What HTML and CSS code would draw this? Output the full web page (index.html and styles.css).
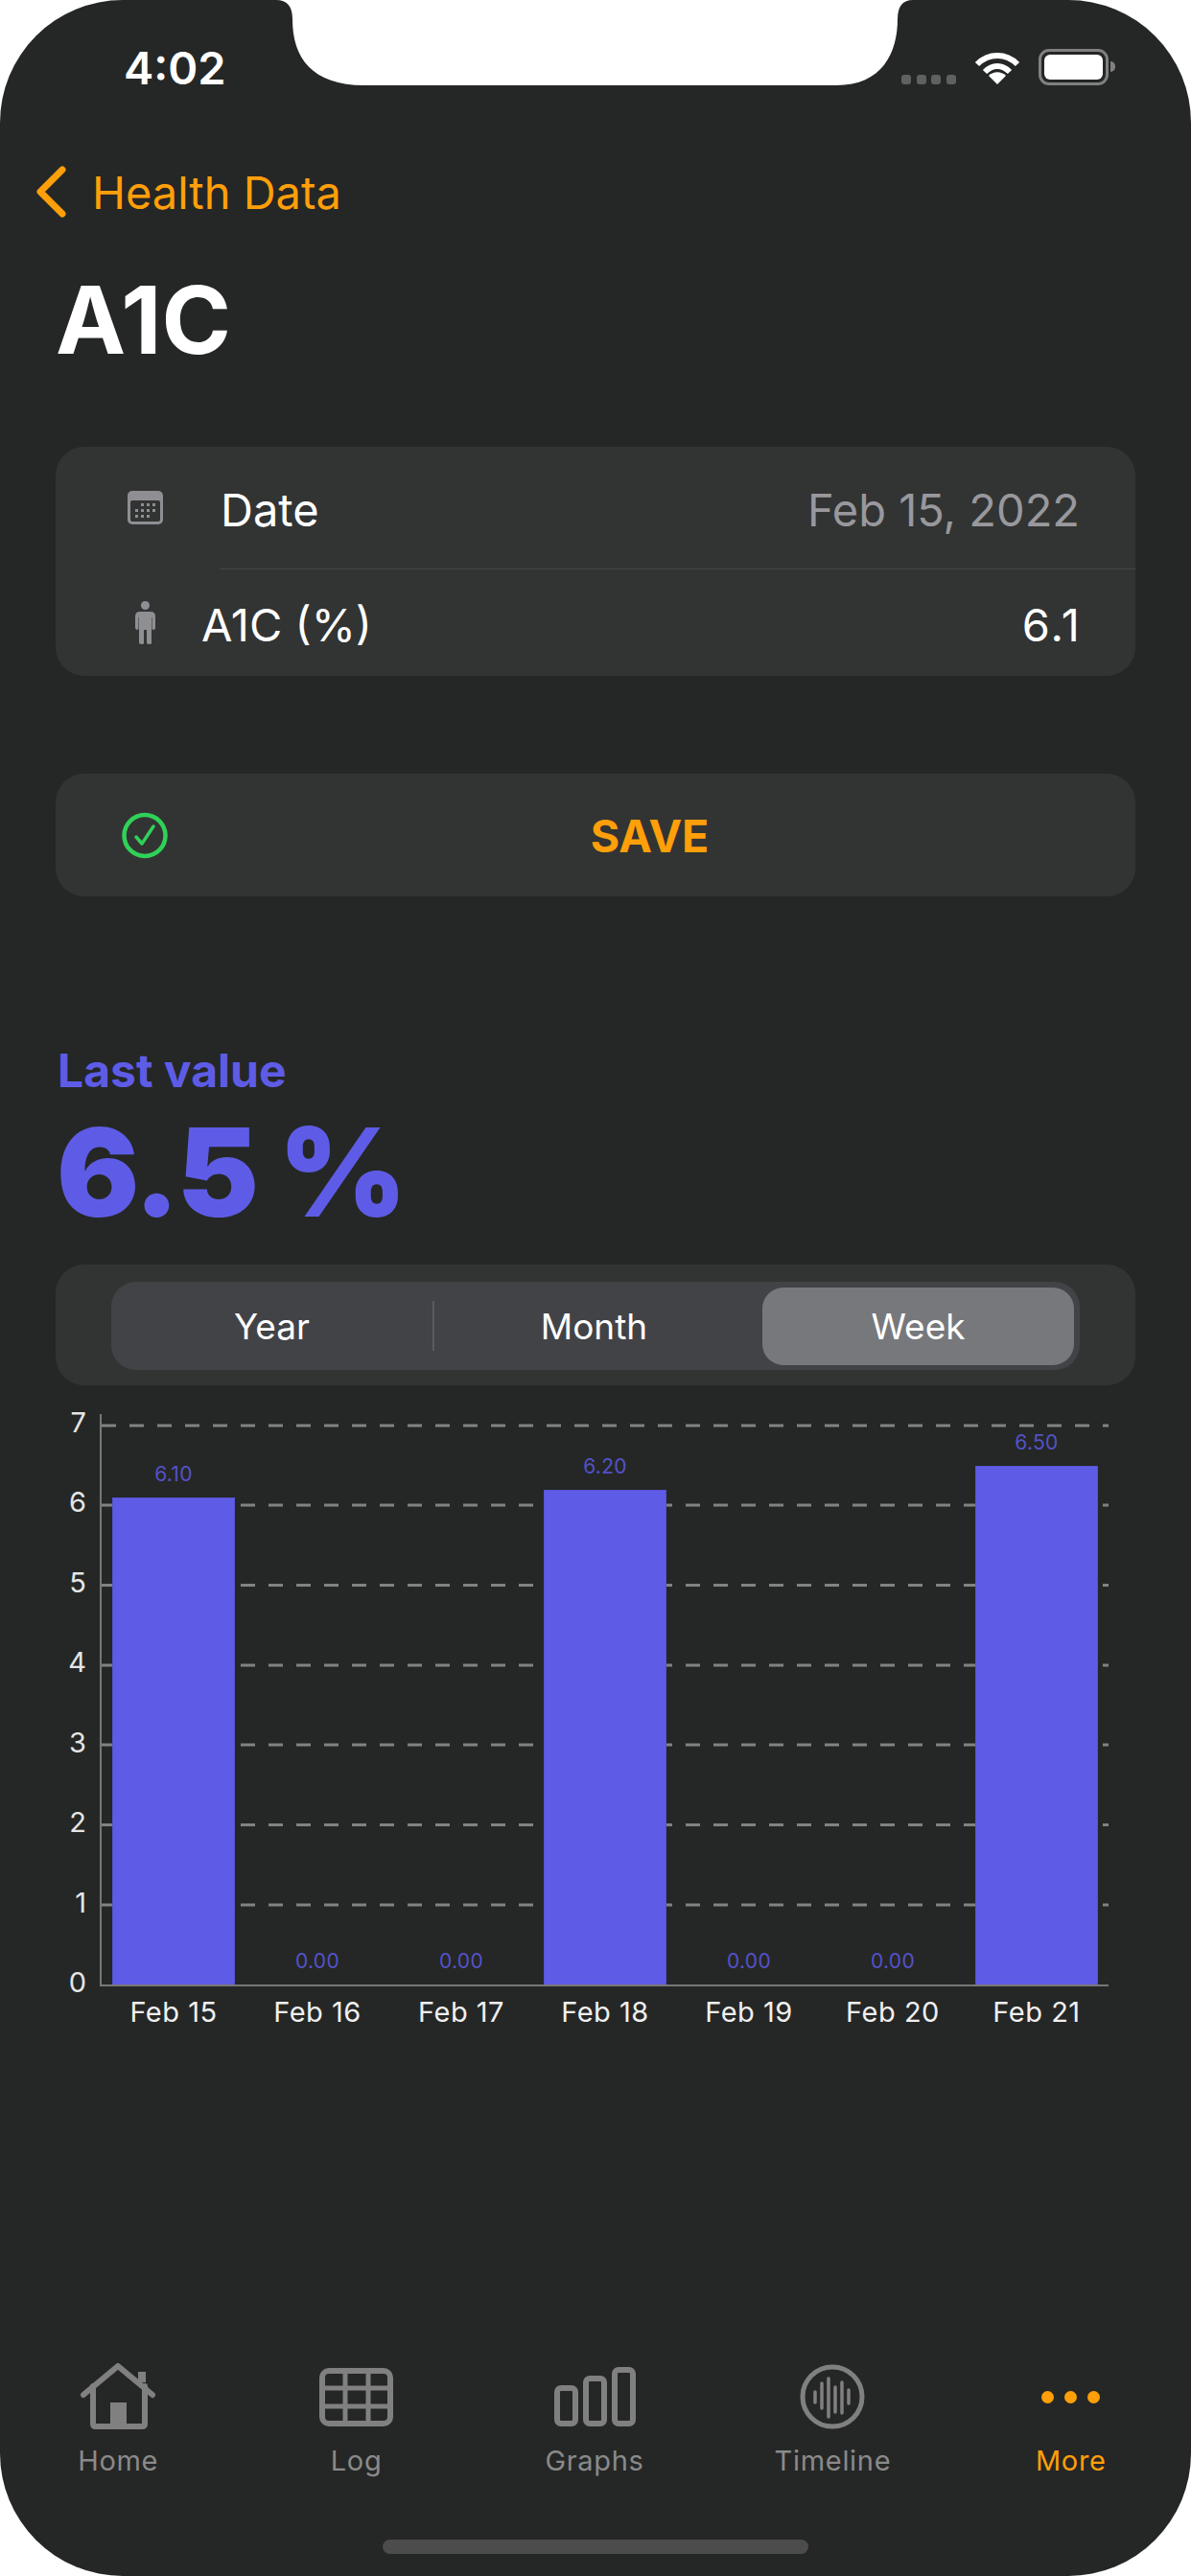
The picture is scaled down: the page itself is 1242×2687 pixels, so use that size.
FILE: index.html
```html
<!DOCTYPE html>
<html lang="en">
<head>
    <meta charset="UTF-8">
    <meta name="viewport" content="width=device-width, initial-scale=1.0">
    <title>A1C</title>
    <link rel="stylesheet" href="styles.css">
</head>
<body>
    <div class="screen">
        <svg class="notch" width="680" height="89" viewBox="0 0 680 89">
            <path d="M8 0Q25 0 25 20C25 60 45 89 100 89L592 89C640 89 656 55 656 20Q656 0 672 0Z" fill="#fff"/>
        </svg>

        <div class="status-bar">
            <span class="time">4:02</span>
            <div class="status-icons">
                <div class="signal"><i></i><i></i><i></i><i></i></div>
                <svg class="wifi" width="48" height="36" viewBox="0 0 48 36">
                    <path d="M3 15C15 3 33 3 45 15" fill="none" stroke="#fff" stroke-width="6"/>
                    <path d="M11 23C19 15 29 15 37 23" fill="none" stroke="#fff" stroke-width="6"/>
                    <path d="M15 27C20 22 28 22 33 27L24 36Z" fill="#fff"/>
                </svg>
                <div class="battery"><div class="battery-fill"></div></div>
                <div class="battery-nub"></div>
            </div>
        </div>

        <a class="back-link" href="#">
            <svg width="34" height="54" viewBox="0 0 34 54">
                <path d="M29 4L6 27L29 50" fill="none" stroke="#ff9f0a" stroke-width="7" stroke-linecap="round" stroke-linejoin="round"/>
            </svg>
            <span>Health Data</span>
        </a>

        <h1 class="title">A1C</h1>

        <div class="card form-card">
            <div class="row row-date">
                <div class="row-icon">
                    <svg width="37" height="35" viewBox="0 0 37 35">
                        <rect width="37" height="35" rx="5" fill="#8e8e93"/>
                        <rect x="3" y="10" width="31" height="22" rx="2" fill="#323433"/>
                        <g fill="#8e8e93">
                            <rect x="14" y="13" width="3" height="3"/><rect x="20" y="13" width="3" height="3"/><rect x="26" y="13" width="3" height="3"/>
                            <rect x="8" y="19" width="3" height="3"/><rect x="14" y="19" width="3" height="3"/><rect x="20" y="19" width="3" height="3"/><rect x="26" y="19" width="3" height="3"/>
                            <rect x="8" y="25" width="3" height="3"/><rect x="14" y="25" width="3" height="3"/><rect x="20" y="25" width="3" height="3"/>
                        </g>
                    </svg>
                </div>
                <span class="row-label">Date</span>
                <span class="row-value muted">Feb 15, 2022</span>
            </div>
            <div class="row-divider"></div>
            <div class="row row-a1c">
                <div class="row-icon">
                    <svg width="21" height="45" viewBox="0 0 21 45">
                        <circle cx="10.5" cy="4.5" r="4.5" fill="#8e8e93"/>
                        <path d="M5 11H16Q21 11 21 16V28Q21 30 19 30T17.500 28V17H17V44Q17 45 15 45T12 44V30H9V44Q9 45 7 45T4 44V17H3.500V28Q3.500 30 2 30T0 28V16Q0 11 5 11Z" fill="#8e8e93"/>
                    </svg>
                </div>
                <span class="row-label">A1C (%)</span>
                <span class="row-value">6.1</span>
            </div>
        </div>

        <div class="card save-card">
            <svg width="48" height="49" viewBox="0 0 48 49">
                <circle cx="24" cy="24.500" r="21.500" fill="none" stroke="#30d158" stroke-width="4.500"/>
                <path d="M15 26L21 33L33 15" fill="none" stroke="#30d158" stroke-width="3.500" stroke-linecap="round" stroke-linejoin="round"/>
            </svg>
            <span class="save-label">SAVE</span>
        </div>

        <p class="last-label">Last value</p>
        <p class="last-value">6.5 %</p>

        <div class="card range-card">
            <div class="segments">
                <div class="segment seg-year">Year</div>
                <div class="segment-sep"></div>
                <div class="segment seg-month">Month</div>
                <div class="segment seg-week active">Week</div>
            </div>
        </div>

        <div class="chart">
            <div class="y-axis">
                <span>7</span><span>6</span><span>5</span><span>4</span><span>3</span><span>2</span><span>1</span><span>0</span>
            </div>
            <div class="plot">
                <svg class="grid" width="1050" height="595" viewBox="0 0 1050 595">
                    <g stroke="#828282" stroke-width="3" stroke-dasharray="15 14">
                        <line x1="0" y1="12" x2="1050" y2="12"/>
                        <line x1="0" y1="95" x2="1050" y2="95"/>
                        <line x1="0" y1="178.500" x2="1050" y2="178.500"/>
                        <line x1="0" y1="262" x2="1050" y2="262"/>
                        <line x1="0" y1="345" x2="1050" y2="345"/>
                        <line x1="0" y1="428.500" x2="1050" y2="428.500"/>
                        <line x1="0" y1="512" x2="1050" y2="512"/>
                    </g>
                </svg>
                <div class="bars">
                    <div class="bar-col"><span class="bar-value">6.10</span><div class="bar" style="height: 508px"></div></div>
                    <div class="bar-col"><span class="bar-value">0.00</span></div>
                    <div class="bar-col"><span class="bar-value">0.00</span></div>
                    <div class="bar-col"><span class="bar-value">6.20</span><div class="bar" style="height: 516px"></div></div>
                    <div class="bar-col"><span class="bar-value">0.00</span></div>
                    <div class="bar-col"><span class="bar-value">0.00</span></div>
                    <div class="bar-col"><span class="bar-value">6.50</span><div class="bar" style="height: 541px"></div></div>
                </div>
            </div>
        </div>
        <div class="x-axis">
            <span>Feb 15</span><span>Feb 16</span><span>Feb 17</span><span>Feb 18</span><span>Feb 19</span><span>Feb 20</span><span>Feb 21</span>
        </div>

        <nav class="tab-bar">
            <a class="tab" href="#">
                <div class="tab-icon">
                    <svg width="78" height="70" viewBox="0 0 78 70" fill="none" stroke="#808080" stroke-width="6" stroke-linecap="round" stroke-linejoin="round">
                        <path d="M3 33L39 3L75 33"/>
                        <path d="M13 24V63Q13 66 16 66H64Q67 66 67 63V24"/>
                        <path d="M64 9V20" stroke-width="8" stroke-linecap="butt"/>
                        <rect x="31" y="41" width="17" height="25" stroke="none" fill="#808080"/>
                    </svg>
                </div>
                <span>Home</span>
            </a>
            <a class="tab" href="#">
                <div class="tab-icon">
                    <svg width="77" height="61" viewBox="0 0 77 61" fill="none" stroke="#808080" stroke-width="6">
                        <rect x="3" y="3" width="71" height="55" rx="7"/>
                        <path d="M27 3V58M51 3V58M3 21H74M3 40H74" stroke-width="5"/>
                    </svg>
                </div>
                <span>Log</span>
            </a>
            <a class="tab" href="#">
                <div class="tab-icon">
                    <svg width="85" height="62" viewBox="0 0 85 62" fill="none" stroke="#808080" stroke-width="6">
                        <rect x="3" y="22" width="19" height="37" rx="4"/>
                        <rect x="33" y="12" width="19" height="47" rx="4"/>
                        <rect x="63" y="3" width="19" height="56" rx="4"/>
                    </svg>
                </div>
                <span>Graphs</span>
            </a>
            <a class="tab" href="#">
                <div class="tab-icon">
                    <svg width="68" height="68" viewBox="0 0 68 68" fill="none" stroke="#808080">
                        <circle cx="34" cy="34" r="31" stroke-width="5"/>
                        <g stroke-width="3.500" stroke-linecap="round">
                            <path d="M16 29V40M23 20V46M30 15V55M37 24V50M44 19V51M51 27V41"/>
                        </g>
                    </svg>
                </div>
                <span>Timeline</span>
            </a>
            <a class="tab tab-active" href="#">
                <div class="tab-icon">
                    <div class="more-dots"><i></i><i></i><i></i></div>
                </div>
                <span>More</span>
            </a>
        </nav>

        <div class="home-indicator"></div>
    </div>
</body>
</html>
```
FILE: styles.css
```css
* {
    box-sizing: border-box;
}

body {
    margin: 0;
    background-color: #fff;
    font-family: Inter, "Open Sans", sans-serif;
    color: #fff;
}

p, h1 {
    margin: 0;
}

a {
    text-decoration: none;
    color: inherit;
}

.screen {
    position: relative;
    display: flex;
    flex-direction: column;
    width: 1242px;
    height: 2687px;
    padding-bottom: 23px;
    background-color: #252726;
    border-radius: 128px;
    overflow: hidden;
}

.notch {
    position: absolute;
    top: 0;
    left: 280px;
}

/* Status bar */
.status-bar {
    display: flex;
    justify-content: space-between;
    align-items: flex-end;
    height: 89px;
    padding: 0 79px 0 129px;
}

.time {
    font-size: 47px;
    font-weight: 600;
    line-height: 36px;
}

.status-icons {
    display: flex;
    align-items: flex-end;
}

.signal {
    display: flex;
    gap: 5.600px;
    margin-right: 19px;
    margin-bottom: 1px;
}

.signal i {
    width: 10px;
    height: 10px;
    border-radius: 3px;
    background-color: #5f605f;
}

.wifi {
    margin-right: 19px;
    margin-bottom: 1px;
}

.battery {
    width: 73px;
    height: 38px;
    padding: 3px;
    border: 3px solid #808080;
    border-radius: 11px;
}

.battery-fill {
    height: 100%;
    background-color: #fff;
    border-radius: 6px;
}

.battery-nub {
    width: 5px;
    height: 11px;
    margin: 0 0 14px 2px;
    background-color: #808080;
    border-radius: 0 5px 5px 0;
}

/* Header */
.back-link {
    display: flex;
    align-items: center;
    gap: 26px;
    height: 54px;
    margin-top: 84px;
    padding-left: 36px;
    font-size: 47px;
    color: #ff9f0a;
}

.title {
    margin-top: 67px;
    padding-left: 58px;
    font-size: 98px;
    font-weight: 700;
    line-height: 80px;
}

/* Cards */
.card {
    margin: 0 58px;
    background-color: #323433;
    border-radius: 30px;
}

.form-card {
    height: 239px;
    margin-top: 92px;
}

.row {
    display: flex;
    align-items: center;
    padding: 0 58px 0 72px;
    font-size: 47px;
}

.row-date {
    height: 127px;
}

.row-a1c {
    height: 111px;
}

.row-divider {
    height: 1px;
    margin-left: 171px;
    background-color: #464847;
}

.row-icon {
    display: flex;
    justify-content: center;
    width: 42px;
}

.row-label, .row-value {
    padding-top: 3px;
}

.row-date .row-label {
    margin-left: 58px;
}

.row-a1c .row-label {
    margin-left: 38px;
}

.row-value {
    margin-left: auto;
}

.row-a1c .row-value {
    margin-right: -2px;
    letter-spacing: 2px;
}

.muted {
    color: #98989d;
}

.save-card {
    display: flex;
    align-items: center;
    height: 128px;
    margin-top: 102px;
    padding-left: 69px;
}

.save-label {
    flex: 1;
    margin-right: 4px;
    padding-top: 2px;
    text-align: center;
    font-size: 46.500px;
    font-weight: 700;
    color: #ff9f0a;
}

/* Last value */
.last-label {
    margin-top: 152px;
    padding-left: 60px;
    font-size: 48px;
    font-weight: 700;
    line-height: 60px;
    color: #5e5ce6;
}

.last-value {
    margin-top: 16px;
    padding-left: 59px;
    font-size: 128px;
    font-weight: 900;
    line-height: 120px;
    letter-spacing: -2.500px;
    color: #5e5ce6;
}

/* Range picker */
.range-card {
    height: 126px;
    margin-top: 36px;
    padding: 18px 58px;
}

.segments {
    display: flex;
    align-items: center;
    height: 92px;
    background-color: #424347;
    border-radius: 26px;
}

.segment {
    display: flex;
    justify-content: center;
    align-items: center;
    height: 81px;
    font-size: 37px;
}

.seg-year {
    width: 335px;
}

.seg-month {
    width: 333px;
}

.seg-week {
    width: 325px;
    margin-left: 9px;
}

.segment-sep {
    width: 2px;
    height: 52px;
    background-color: #5a5b5f;
}

.segment.active {
    background-color: #77787c;
    border-radius: 22px;
}

/* Chart */
.chart {
    display: flex;
    height: 597px;
    margin-top: 30px;
}

.y-axis {
    display: flex;
    flex-direction: column;
    justify-content: space-between;
    align-items: flex-end;
    width: 90px;
    height: 620px;
    margin-top: -9px;
    font-size: 29px;
    line-height: 36px;
    color: #e5e5e5;
}

.plot {
    position: relative;
    width: 1052px;
    margin-left: 14px;
    border-left: 2px solid #777;
    border-bottom: 2px solid #777;
}

.grid {
    position: absolute;
    top: 0;
    left: 0;
}

.bars {
    position: relative;
    display: flex;
    height: 100%;
}

.bar-col {
    display: flex;
    flex-direction: column;
    justify-content: flex-end;
    align-items: center;
    width: 150px;
}

.bar-value {
    margin-bottom: 12px;
    font-size: 21px;
    line-height: 24px;
    letter-spacing: 0.300px;
    color: #5452c9;
}

.bar {
    width: 128px;
    background-color: #5e5ce6;
    border: 1px solid #5553d0;
    border-bottom: 0;
}

.x-axis {
    display: flex;
    margin-top: 9px;
    padding-left: 106px;
    font-size: 29px;
    line-height: 36px;
    letter-spacing: 0.500px;
    color: #f0f0f0;
}

.x-axis span {
    width: 150px;
    text-align: center;
}

/* Tab bar */
.tab-bar {
    display: flex;
    margin: auto 1px 0 -1px;
    font-size: 29px;
    line-height: 36px;
    letter-spacing: 0.700px;
    color: #8a8a8a;
}

.tab {
    display: flex;
    flex-direction: column;
    align-items: center;
    flex: 1;
}

.tab-icon {
    display: flex;
    justify-content: center;
    align-items: center;
    height: 72px;
    margin-bottom: 13px;
}

.tab-active {
    color: #ff9f0a;
}

.more-dots {
    display: flex;
    gap: 11px;
}

.more-dots i {
    width: 13px;
    height: 13px;
    border-radius: 50%;
    background-color: #ff9f0a;
}

.home-indicator {
    width: 444px;
    height: 15px;
    margin: 64px auto 0;
    background-color: #4c4c4c;
    border-radius: 8px;
}
```
